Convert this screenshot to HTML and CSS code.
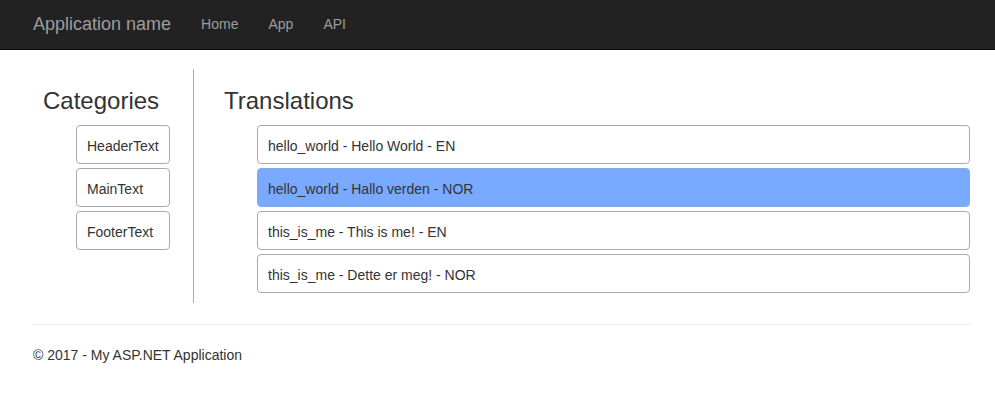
FILE: index.html
```html
<!DOCTYPE html>
<html>
<head>
<meta charset="utf-8">
<title>Translations</title>
<link rel="stylesheet" href="styles.css">
</head>
<body>
<nav class="navbar">
  <div class="wrap nav-inner">
    <a class="brand" href="#">Application name</a>
    <ul class="nav-links">
      <li><a href="#">Home</a></li>
      <li><a href="#">App</a></li>
      <li><a href="#">API</a></li>
    </ul>
  </div>
</nav>
<div class="wrap">
  <div class="main">
    <div class="col-left">
      <h3 class="heading heading-left">Categories</h3>
      <div class="list list-left">
        <div class="item">HeaderText</div>
        <div class="item">MainText</div>
        <div class="item">FooterText</div>
      </div>
    </div>
    <div class="col-right">
      <h3 class="heading">Translations</h3>
      <div class="list list-right">
        <div class="item">hello_world - Hello World - EN</div>
        <div class="item active">hello_world - Hallo verden - NOR</div>
        <div class="item">this_is_me - This is me! - EN</div>
        <div class="item">this_is_me - Dette er meg! - NOR</div>
      </div>
    </div>
  </div>
  <hr class="rule">
  <footer class="footer">
    <p>&copy; 2017 - My ASP.NET Application</p>
  </footer>
</div>
</body>
</html>
```
FILE: styles.css
```css
* { box-sizing: border-box; }
html, body { margin: 0; padding: 0; }
body {
  font-family: "Liberation Sans", Arial, sans-serif;
  font-size: 14px;
  line-height: 20px;
  color: #333;
  background: #fff;
}
.wrap {
  margin-left: 33px;
  width: 938px;
}
.navbar {
  background: #222;
  border-bottom: 1px solid #080808;
  height: 50px;
}
.nav-inner {
  display: flex;
  align-items: flex-start;
  height: 49px;
}
.brand {
  display: block;
  font-size: 18px;
  line-height: 20px;
  padding: 14px 15px 15px 0;
  color: #9d9d9d;
  text-decoration: none;
}
.nav-links {
  display: flex;
  list-style: none;
  margin: 0;
  padding: 0;
}
.nav-links a {
  display: block;
  padding: 14px 15px 15px;
  line-height: 20px;
  color: #9d9d9d;
  text-decoration: none;
}
.main {
  display: flex;
  margin-top: 19px;
  align-items: stretch;
}
.col-left {
  width: 161px;
  border-right: 1px solid #aaa;
  padding-bottom: 10px;
}
.col-right {
  flex: 1;
  padding-left: 30px;
  padding-bottom: 10px;
}
.heading {
  font-size: 24px;
  font-weight: 500;
  line-height: 26.4px;
  margin: 19px 0 11px;
  color: #333;
}
.heading-left { padding-left: 10px; }
.list {
  display: flex;
  flex-direction: column;
  gap: 4px;
}
.list-left {
  padding-left: 43px;
  width: 137px;
}
.list-right {
  padding-left: 33px;
  width: 746px;
}
.item {
  border: 1px solid #aaa;
  border-radius: 4px;
  padding: 10px 10px 7px;
  line-height: 20px;
  height: 39px;
  white-space: nowrap;
  background: #fff;
}
.item.active {
  background: #7aaaff;
  border-color: #86a9e6;
}
.rule {
  margin: 21px 0 20px;
  border: 0;
  border-top: 1px solid #eee;
  height: 0;
}
.footer p {
  margin: 0;
}
```
